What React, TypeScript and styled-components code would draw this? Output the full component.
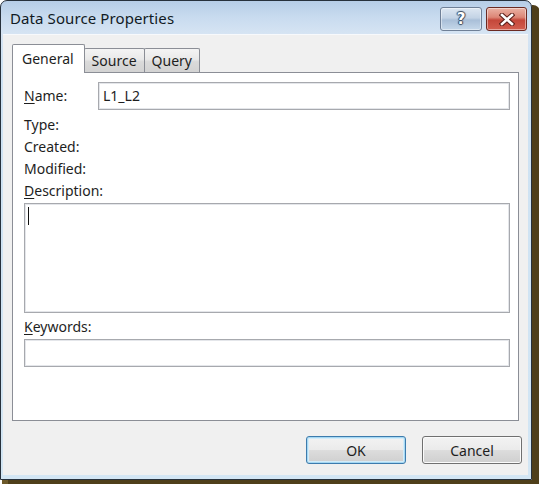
import React from 'react';
import styled, { createGlobalStyle } from 'styled-components';

const Global = createGlobalStyle`
  html, body { margin: 0; padding: 0; background: #ffffff; }
  body { font-family: "Noto Sans", "Open Sans", sans-serif; color: #1e1e1e; }
  * { box-sizing: border-box; }
`;

const Desktop = styled.div`
  width: 539px;
  height: 484px;
  overflow: hidden;
  background: #ffffff;
`;

const Window = styled.div`
  width: 532px;
  height: 480px;
  border: 1px solid #27313c;
  border-radius: 7px 7px 0 0;
  background: linear-gradient(180deg, #b6cde7 0px, #c8dbef 16px, #d6e4f3 33px, #cde1f2 60px, #d3e6f4 100%);
  box-shadow: 8px 5px 0 #4f3f1a, 2px 5px 0 #6d5a2a;
  display: flex;
  flex-direction: column;
  padding: 0 3px 4px 2px;
`;

const TitleBar = styled.div`
  height: 33px;
  display: flex;
  align-items: flex-start;
  padding: 0 1px 0 7px;
`;

const Title = styled.div`
  font-size: 15px;
  line-height: 34px;
  color: #111a24;
  flex: 1;
  letter-spacing: 0.1px;
`;

const CaptionGroup = styled.div`
  display: flex;
  gap: 4px;
  margin-top: 6px;
`;

const CaptionButton = styled.div<{ $kind: 'help' | 'close' }>`
  width: ${(p) => (p.$kind === 'help' ? 42 : 41)}px;
  height: 24px;
  border-radius: 3px;
  display: flex;
  align-items: center;
  justify-content: center;
  border: 1px solid ${(p) => (p.$kind === 'help' ? '#6f8097' : '#6b2a22')};
  box-shadow: inset 0 0 0 1px rgba(255, 255, 255, 0.45);
  background: ${(p) =>
    p.$kind === 'help'
      ? 'linear-gradient(180deg, #dde7f2 0%, #c3d3e5 45%, #a9bfd8 55%, #c6d8ea 100%)'
      : 'linear-gradient(180deg, #eab2a4 0%, #dc8676 42%, #c4473a 55%, #d35f50 100%)'};
`;

const HelpGlyph = styled.span`
  font-family: "DejaVu Sans", sans-serif;
  font-weight: bold;
  font-size: 15px;
  line-height: 1;
  color: #ffffff;
  text-shadow: 0 0 1px #3c4c62, 1px 0 1px #3c4c62, -1px 0 1px #3c4c62, 0 1px 1px #3c4c62, 0 -1px 1px #3c4c62;
`;

const Client = styled.div`
  flex: 1;
  display: flex;
  flex-direction: column;
  background: #f0f0f0;
  border-top: 1px solid #f7f9fc;
  padding: 9px 7px 11px 9px;
`;

const TabStrip = styled.div`
  height: 28px;
  display: flex;
  align-items: flex-end;
  position: relative;
  z-index: 1;
`;

const Tab = styled.div<{ $active?: boolean }>`
  height: ${(p) => (p.$active ? 29 : 24)}px;
  margin-bottom: ${(p) => (p.$active ? -1 : 0)}px;
  margin-left: -1px;
  padding: 0 ${(p) => (p.$active ? '10px 0 9px' : '7px')};
  display: flex;
  align-items: center;
  font-size: 14px;
  color: #1e1e1e;
  border: 1px solid #8b8e96;
  border-bottom: none;
  border-radius: 2px 2px 0 0;
  background: ${(p) =>
    p.$active ? '#ffffff' : 'linear-gradient(180deg, #f4f4f4 0%, #e9e9e9 45%, #dadada 55%, #d3d3d3 100%)'};
  padding-bottom: ${(p) => (p.$active ? 2 : 0)}px;
  &:first-child { margin-left: 0; }
`;

const Panel = styled.div`
  flex: 1;
  margin-right: 2px;
  background: #ffffff;
  border: 1px solid #8b8e96;
  padding: 9px 8px 0 11px;
  display: flex;
  flex-direction: column;
`;

const NameRow = styled.div`
  display: flex;
  align-items: center;
`;

const Label = styled.div<{ $width?: number; $gap?: number }>`
  font-size: 14px;
  line-height: 22px;
  color: #1e1e1e;
  width: ${(p) => (p.$width ? `${p.$width}px` : 'auto')};
  margin-top: ${(p) => p.$gap ?? 0}px;
  flex-shrink: 0;
  u { text-decoration-thickness: 1px; text-underline-offset: 2px; }
`;

const InfoList = styled.div`
  margin-top: 4px;
  display: flex;
  flex-direction: column;
`;

const Field = styled.div<{ $height: number }>`
  flex: 1;
  height: ${(p) => p.$height}px;
  border: 1px solid #a7a9ae;
  box-shadow: inset 0 0 0 1px #e4e6ea;
  background: #ffffff;
  font-size: 14px;
  line-height: 24px;
  padding: 1px 4px;
  color: #1e1e1e;
  position: relative;
`;

const BlockField = styled(Field)`
  flex: none;
  width: 100%;
  margin-top: 1px;
`;

const Caret = styled.span`
  position: absolute;
  left: 3px;
  top: 3px;
  width: 1px;
  height: 18px;
  background: #111;
`;

const ButtonRow = styled.div`
  display: flex;
  justify-content: flex-end;
  gap: 16px;
  margin-top: 15px;
  margin-right: -1px;
`;

const Button = styled.div<{ $default?: boolean }>`
  width: 100px;
  height: 28px;
  border-radius: 3px;
  display: flex;
  align-items: center;
  justify-content: center;
  font-size: 14px;
  color: #1e1e1e;
  border: 1px solid ${(p) => (p.$default ? '#3d7bad' : '#707070')};
  box-shadow: ${(p) =>
    p.$default ? 'inset 0 0 0 1px #a6d8f3, inset 0 0 0 2px #d4ecf9' : 'inset 0 0 0 1px #fbfbfb'};
  background: linear-gradient(180deg, #f3f3f3 0%, #ebebeb 48%, #dcdcdc 52%, #cfcfcf 100%);
`;

export default function App() {
  return (
    <>
      <Global />
      <Desktop>
        <Window>
          <TitleBar>
            <Title>Data Source Properties</Title>
            <CaptionGroup>
              <CaptionButton $kind="help">
                <HelpGlyph>?</HelpGlyph>
              </CaptionButton>
              <CaptionButton $kind="close">
                <svg width="16" height="13" viewBox="0 0 16 13">
                  <path d="M3 2 L13 11 M13 2 L3 11" stroke="#5a1e18" strokeWidth="4.6" strokeLinecap="square" />
                  <path d="M3 2 L13 11 M13 2 L3 11" stroke="#ffffff" strokeWidth="2.6" strokeLinecap="square" />
                </svg>
              </CaptionButton>
            </CaptionGroup>
          </TitleBar>
          <Client>
            <TabStrip>
              <Tab $active>General</Tab>
              <Tab>Source</Tab>
              <Tab>Query</Tab>
            </TabStrip>
            <Panel>
              <NameRow>
                <Label $width={74}>
                  <u>N</u>ame:
                </Label>
                <Field $height={28}>L1_L2</Field>
              </NameRow>
              <InfoList>
                <Label>Type:</Label>
                <Label>Created:</Label>
                <Label>Modified:</Label>
                <Label>
                  <u>D</u>escription:
                </Label>
              </InfoList>
              <BlockField $height={110}>
                <Caret />
              </BlockField>
              <Label $gap={3}>
                <u>K</u>eywords:
              </Label>
              <BlockField $height={28} />
            </Panel>
            <ButtonRow>
              <Button $default>OK</Button>
              <Button>Cancel</Button>
            </ButtonRow>
          </Client>
        </Window>
      </Desktop>
    </>
  );
}
